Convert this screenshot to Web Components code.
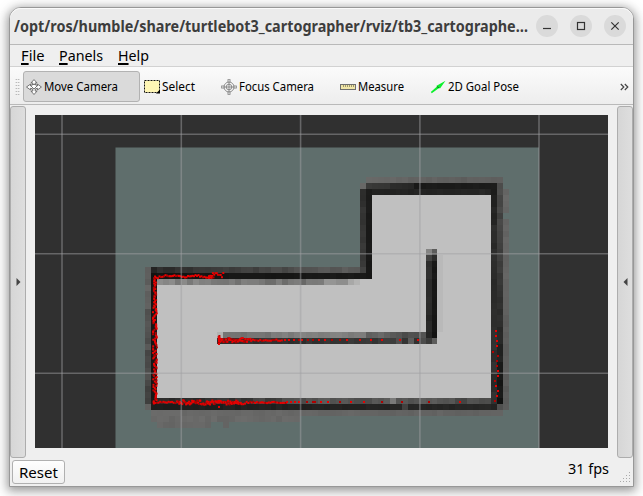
<!DOCTYPE html>
<html lang="en">
<head>
<meta charset="utf-8">
<title>RViz</title>
<style>
html,body{margin:0;height:100%;overflow:hidden}
body{background:#fff;font-family:"Noto Sans","Open Sans",sans-serif;color:#000}
</style>
</head>
<body>
<rviz-window></rviz-window>
<script>
const make = (name, html, init) => customElements.define(name, class extends HTMLElement {
  connectedCallback() {
    if (this.shadowRoot) return;
    this.attachShadow({mode: 'open'}).innerHTML = html;
    if (init) init.call(this, this.shadowRoot);
  }
});

// Text condensed or widened to the width given in "w".
make('fit-text', `<style>
:host{display:block;white-space:nowrap;flex:none}
span{display:inline-block;transform-origin:0 50%;white-space:nowrap}
u{text-decoration-thickness:2px;text-underline-offset:2px;text-decoration-skip-ink:none}
</style><span></span>`, function (root) {
  const s = root.querySelector('span');
  const t = this.getAttribute('text');
  if (this.hasAttribute('key')) {
    const u = document.createElement('u');
    u.textContent = t[0];
    s.append(u, t.slice(1));
  } else s.textContent = t;
  const w = +this.getAttribute('w');
  const n = s.getBoundingClientRect().width;
  s.style.transform = `scaleX(${w / n})`;
  this.style.width = w + 'px';
});

make('win-button', `<style>
:host{display:block;width:22px;height:22px;border-radius:50%;background:#dadada;flex:none}
svg{display:block}path,rect{fill:none;stroke:#333;stroke-width:1.2}
</style><svg width="22" height="22"></svg>`, function (root) {
  root.querySelector('svg').innerHTML = {
    min: '<path d="M7 13.5h8"/>',
    max: '<rect x="7.5" y="7.5" width="7" height="7"/>',
    close: '<path d="M7.3 7.3l7.4 7.4M14.7 7.3l-7.4 7.4"/>'
  }[this.getAttribute('kind')];
});

make('title-bar', `<style>
:host{display:flex;box-sizing:border-box;height:37px;align-items:center;background:#ebebeb;border-bottom:1px solid #b9b9b9;box-shadow:inset 0 1px #fafafa;border-radius:11px 11px 0 0;padding:0 7px 0 4px;color:#3d3d3d}
fit-text{font-weight:700;font-size:16px;line-height:36px}
div{display:flex;gap:12px;margin-left:auto}
</style><fit-text w="514" text="/opt/ros/humble/share/turtlebot3_cartographer/rviz/tb3_cartographe…"></fit-text>
<div><win-button kind="min"></win-button><win-button kind="max"></win-button><win-button kind="close"></win-button></div>`);

make('menu-bar', `<style>
:host{display:flex;box-sizing:border-box;height:22px;background:#efefef;border-bottom:1px solid #d2d2d2;padding-left:10.5px;gap:15px;font-size:15px;line-height:21px}
</style><fit-text key w="23.5" text="File"></fit-text><fit-text key w="44" text="Panels"></fit-text><fit-text key w="31" text="Help"></fit-text>`);

const ICONS = {
  move: '<g fill="#fff" stroke="#555" stroke-width=".8"><path d="M8 .6l3 3.3H9.2V6l2.2.8V5l4 3-4 3V9.200L9.200 10v2.100H11L8 15.500 5 12.100h1.800V10L4.600 9.200V11L.5 8l4.100-3v1.800L6.800 6V3.900H5z"/><path d="M4.500 6.500L8 5.300l3.500 1.200L8 10z"/></g>',
  select: '<rect x=".5" y="1.500" width="15" height="12" fill="#fff6b5" stroke="#111" stroke-dasharray="2 1"/><path d="M16 10.500v4h-4z"/>',
  focus: '<g fill="none" stroke="#777" stroke-width=".8"><circle cx="8" cy="8" r="5"/><circle cx="8" cy="8" r="2.800"/><path d="M7 3.500V.2h2v3.300M7 12.500v3.300h2v-3.300M3.500 7H.2v2h3.300M12.500 7h3.300v2h-3.300M8 3v10M3 8h10"/></g>',
  measure: '<rect x=".5" y="5.500" width="15" height="5" fill="#f0e6a8" stroke="#6e6e6e"/><path d="M3.500 6v2M5.500 6v2M7.500 6v2M9.500 6v2M11.500 6v2M13.500 6v2" stroke="#8a8460" stroke-width=".8"/>',
  goal: '<path d="M.8 13L7 7.500 6.200 7 15.500 1.700 10 9.500 9 9 1.800 14.300z" fill="#0bf02b"/><path d="M7 7.500L9 9" stroke="#176b22"/>'
};
make('tool-button', `<style>
:host{display:flex;box-sizing:border-box;align-items:center;height:31px;border:1px solid transparent;border-radius:3px;padding-left:2px;gap:2px;font-size:12px;flex:none}
:host([active]){background:#dadada;border-color:#b2b2b2}
svg{display:block;flex:none}
</style><svg width="16" height="16" viewBox="0 0 16 16"></svg><fit-text></fit-text>`, function (root) {
  root.querySelector('svg').innerHTML = ICONS[this.getAttribute('icon')];
  const f = document.createElement('fit-text');
  f.setAttribute('w', this.getAttribute('w'));
  f.setAttribute('text', this.getAttribute('label'));
  root.querySelector('fit-text').replaceWith(f);
  this.style.width = this.getAttribute('box') + 'px';
});

make('tool-bar', `<style>
:host{display:flex;box-sizing:border-box;height:38px;align-items:center;background:linear-gradient(#fbfbfb,#ededed);border-bottom:1px solid #b9b9b9;padding:2px 4px 0 5px}
i{width:5px;height:17px;margin-right:3px;background:radial-gradient(circle,#aaa .6px,transparent .9px) 0 0/2.500px 3px}
b{margin-left:auto}
svg{display:block}
</style><i></i>
<tool-button active icon="move" label="Move Camera" w="74" box="117"></tool-button>
<tool-button icon="select" label="Select" w="33" box="77" style="margin-left:1px"></tool-button>
<tool-button icon="focus" label="Focus Camera" w="75" box="119"></tool-button>
<tool-button icon="measure" label="Measure" w="46" box="90"></tool-button>
<tool-button icon="goal" label="2D Goal Pose" w="71" box="120"></tool-button>
<b><svg width="9" height="8"><path d="M.8 1l3 3-3 3M4.800 1l3 3-3 3" fill="none" stroke="#444" stroke-width="1.200"/></svg></b>`);

make('dock-handle', `<style>
:host{display:flex;box-sizing:border-box;width:16px;height:352px;margin-top:1px;align-items:center;justify-content:center;background:linear-gradient(90deg,#d6d6d6,#dedede);border:1px solid #adadad;border-radius:3px;flex:none}
:host([flip]) svg{transform:scaleX(-1)}
</style><svg width="5" height="8"><path d="M.5 0v8L4.500 4z" fill="#444"/></svg>`);

make('map-view', `<style>:host{display:block;width:573px;height:333px;margin:10px 9px 0;background:#303030;flex:none}svg{display:block}</style>
<svg width="573" height="333" viewBox="35 115 573 333"></svg>`, function (root) {
  let seed = 7;
  const rnd = () => (seed = (seed * 16807) % 2147483647) / 2147483647;
  const X = c => Math.round(145.3 + 5.963 * c), Y = r => Math.round(266.9 + 5.963 * r);
  const out = ['<rect x="115.500" y="147.500" width="423.500" height="300.500" fill="#5f6e6c"/>'];
  const box = (c0, c1, r0, r1, fill) => out.push(`<rect x="${X(c0)}" y="${Y(r0)}" width="${X(c1 + 1) - X(c0)}" height="${Y(r1 + 1) - Y(r0)}" fill="${fill}"/>`);
  // Strip of cells whose grey runs from a to b, with random variation j.
  const run = (c0, c1, r0, r1, a, b, j) => {
    const n = Math.max(c1 - c0, r1 - r0) || 1;
    for (let c = c0; c <= c1; c++) for (let r = r0; r <= r1; r++) {
      const t = Math.max((c - c0), (r - r0)) / n;
      const v = Math.round(a + (b - a) * t + (rnd() - .5) * j);
      box(c, c, r, r, `rgb(${v},${v},${v - 1})`);
    }
  };
  box(2, 57, 2, 21, '#c0c0c0');
  box(38, 57, -12, 21, '#c0c0c0');
  run(1, 35, 0, 0, 42, 92, 14);
  run(0, 0, 0, 23, 98, 66, 22);
  run(1, 1, 1, 23, 20, 24, 6);
  run(1, 37, 1, 1, 20, 26, 4);
  run(2, 29, 2, 2, 132, 112, 22);
  run(30, 35, 2, 2, 132, 165, 40);
  run(36, 36, -13, 0, 46, 60, 12);
  run(37, 37, -13, 1, 27, 24, 3);
  run(37, 59, -15, -15, 104, 92, 7);
  run(36, 36, -14, -14, 104, 104, 0);
  run(37, 44, -14, -14, 56, 42, 8);
  run(45, 58, -14, -14, 26, 28, 3);
  run(38, 58, -13, -13, 34, 38, 4);
  run(59, 59, -14, -14, 76, 76, 0);
  run(58, 58, -12, 23, 39, 46, 14);
  run(58, 58, -13, -13, 28, 28, 0);
  run(59, 59, -13, -1, 74, 58, 14);
  run(59, 59, 0, 22, 58, 20, 10);
  run(60, 60, -13, -10, 102, 102, 7);
  run(60, 60, -8, 23, 102, 90, 7);
  run(2, 9, 22, 22, 44, 40, 8);
  run(10, 26, 22, 22, 45, 78, 20);
  run(27, 57, 22, 22, 92, 76, 24);
  run(1, 58, 23, 23, 30, 38, 6);
  run(43, 43, 23, 23, 66, 66, 0);
  run(41, 41, 22, 22, 122, 122, 0);
  run(0, 0, 23, 23, 98, 98, 0);
  run(59, 59, 23, 23, 80, 80, 0);
  run(1, 59, 24, 24, 105, 98, 7);
  run(1, 25, 25, 25, 104, 104, 9);
  run(2, 10, 26, 26, 102, 104, 6);
  run(13, 13, 26, 26, 100, 100, 0);
  box(49, 49, -2, 10, '#b9b9b9');
  run(12, 12, 11, 11, 178, 178, 0);
  run(13, 33, 11, 11, 112, 134, 14);
  run(34, 46, 11, 11, 120, 78, 34);
  run(12, 41, 12, 12, 44, 58, 12);
  run(42, 47, 12, 12, 66, 60, 30);
  run(48, 48, 12, 12, 92, 92, 0);
  run(44, 44, 12, 12, 92, 92, 0);
  run(47, 47, -3, -3, 132, 132, 0);
  run(48, 48, -3, -3, 92, 92, 0);
  run(47, 47, -2, -2, 68, 68, 0);
  run(48, 48, -2, -2, 44, 44, 0);
  run(47, 47, -1, 11, 48, 36, 8);
  run(48, 48, -1, 11, 24, 20, 4);
  // Laser returns, 2px each.
  const dot = (x, y) => out.push(`<rect x="${x.toFixed(1)}" y="${y.toFixed(1)}" width="2" height="2" fill="${rnd() < .22 ? '#b00000' : '#e80000'}"/>`);
  for (let x = 154; x < 214; x += 1.5) dot(x, 275.300 + Math.sin(x / 4) * .9 + (rnd() - .5) * 2);
  for (let x = 208; x < 223; x += 1.3) dot(x, 274.500 + (rnd() - .5) * 5.5);
  for (let y = 276; y < 403; y += 1.1) dot(154 + (rnd() - .5) * (y > 305 ? 4 : 2.4), y);
  for (let x = 154; x < 285; x += (x > 175 && x < 240 ? .75 : 1.7)) dot(x, 401.500 + (rnd() - .5) * (x > 175 && x < 245 ? 4.2 : 1.4));
  dot(218, 406);
  for (let x = 218; x < 282; x += (x < 250 ? .7 : 1.8)) dot(x, 339.200 + (rnd() - .5) * (x < 250 ? 4.2 : 1.4));
  for (let y = 335; y < 344; y++) dot(217.6 + rnd(), y);
  for (const x of [284,288,293,298,301,307,312,318,324,331,339,346,359,370,381,399,417]) dot(x, 339);
  for (const x of [286,290,294,298,306,312,314,320,327,339,350,363,381,401,428,459]) dot(x, 401);
  for (const [x, y] of [[495,330],[495,335],[496,340],[496,345],[492,351],[497,355],[496,360],[496,365],[497,370],[497,375],[494,380],[495,385],[497,390],[496,395],[494,400]]) dot(x, y);
  for (const x of [62, 181.300, 300.600, 419.900, 539]) out.push(`<path d="M${x} 115V448" stroke="#a0a0a4" stroke-opacity=".48" stroke-width="1.600"/>`);
  for (const y of [134.300, 253.700, 373.200]) out.push(`<path d="M35 ${y}H608" stroke="#a0a0a4" stroke-opacity=".48" stroke-width="1.600"/>`);
  root.querySelector('svg').innerHTML = out.join('');
});

make('status-row', `<style>
:host{display:flex;box-sizing:border-box;height:28px;padding-left:2px;font-size:15px}
button{all:unset;box-sizing:border-box;width:53px;height:24px;margin-top:2px;border:1px solid #b0b0b0;border-radius:3px;background:linear-gradient(#fefefe,#f1f1f1);padding-left:5.500px;line-height:23px}
.fps{margin-left:auto;line-height:21px}
svg{margin:14px 2px 0 11px;flex:none;width:11px;height:11px}
</style><button><fit-text w="39" text="Reset"></fit-text></button><fit-text class="fps" w="41" text="31 fps"></fit-text>
<svg width="11" height="11" fill="#aaa"></svg>`, function (root) {
  let s = '';
  for (let i = 0; i < 4; i++) for (let j = 3 - i; j < 4; j++) s += `<rect x="${j * 3}" y="${i * 3}" width="1" height="1"/>`;
  root.querySelector('svg').innerHTML = s;
});

make('rviz-window', `<style>
:host{display:block;padding:7px 9px 0;height:496px;box-sizing:border-box}
main{box-sizing:border-box;width:625px;height:480px;border:1px solid #989898;border-radius:12px 12px 0 0;background:#efefef;box-shadow:0 2px 8px 1px rgba(0,0,0,.3),0 3px 14px 3px rgba(0,0,0,.15)}
section{display:flex;height:353px}
</style><main><title-bar></title-bar><menu-bar></menu-bar><tool-bar></tool-bar>
<section><dock-handle></dock-handle><map-view></map-view><dock-handle flip></dock-handle></section>
<status-row></status-row></main>`);
</script>
</body>
</html>
